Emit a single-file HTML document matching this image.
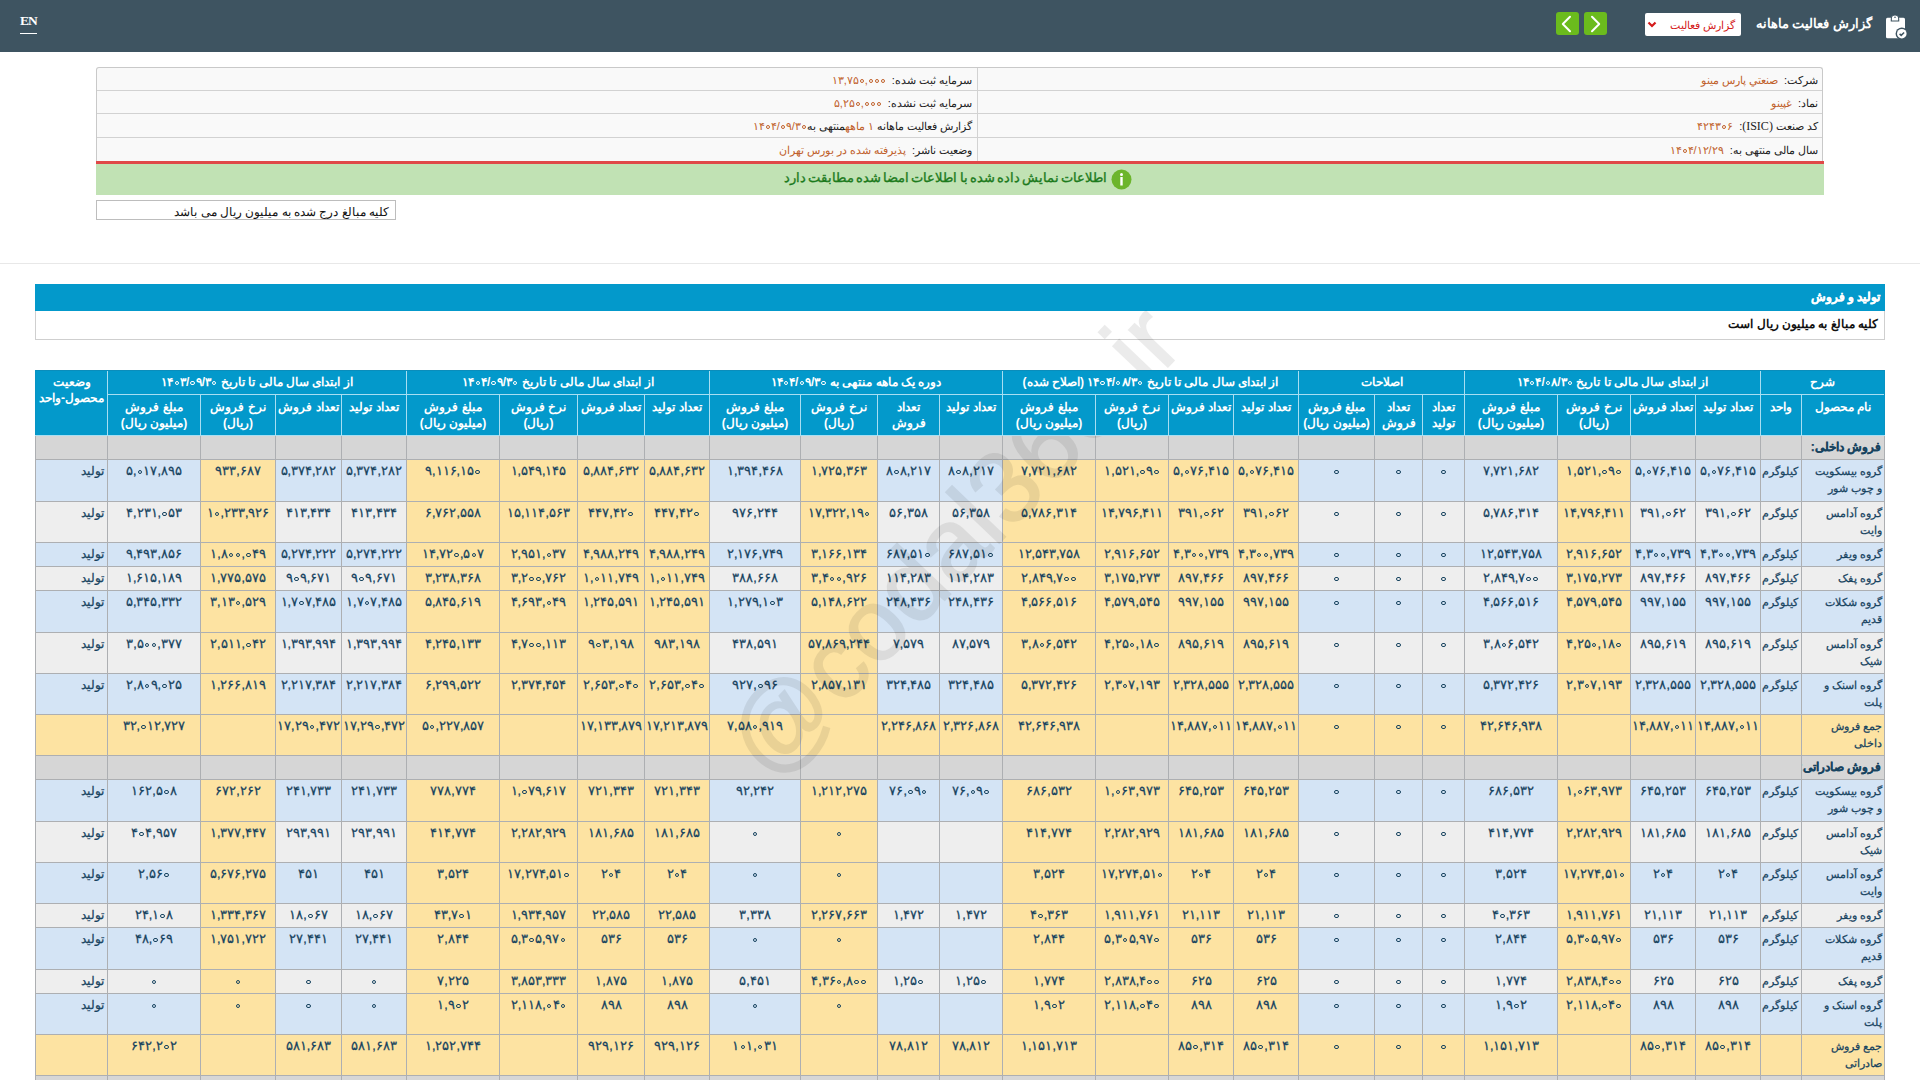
<!DOCTYPE html>
<html lang="fa" dir="rtl">
<head>
<meta charset="utf-8">
<style>
*{box-sizing:border-box}
html,body{margin:0;padding:0}
body{width:1920px;height:1080px;overflow:hidden;position:relative;background:#fff;font-family:"Liberation Sans",sans-serif;color:#222}
.a{position:absolute}
.top{left:0;top:0;width:1920px;height:52px;background:#3e5461}
.en{left:20px;top:13px;font-family:"Liberation Serif",serif;font-size:13.5px;font-weight:bold;letter-spacing:-1px;color:#fff;border-bottom:1px solid #fff;line-height:16px;padding-bottom:4px}
.ttl{right:48px;top:14px;font-size:12.8px;font-weight:bold;color:#fff;line-height:20px;white-space:nowrap}
.dd{left:1645px;top:13px;width:96px;height:23px;background:#fff;border-radius:2px}
.dd span{position:absolute;right:6px;top:3px;font-size:11px;color:#d41a1a;white-space:nowrap;line-height:18px}
.gb{top:12px;width:23px;height:23px;background:#6bbb1d;border-radius:3px}
.info{left:96px;top:67px;width:1727px;height:95px;border:1px solid #c9c9c9;border-bottom:none;border-radius:3px 3px 0 0;background:#f9f9f9}
.ir{position:absolute;height:1px;background:#d2d2d2}
.lb{position:absolute;font-size:11px;color:#222;white-space:nowrap;line-height:16px}
.lb b{font-weight:normal;color:#c0602a}
.red{left:96px;top:161px;width:1728px;height:3px;background:#e04848}
.grn{left:96px;top:164px;width:1728px;height:31px;background:#c1e2b4}
.gt{right:717px;top:5px;text-align:right;font-size:13px;font-weight:normal;word-spacing:-1.5px;color:#1c7a1c;-webkit-text-stroke:0.35px #1c7a1c;line-height:18px;white-space:nowrap}
.note{left:96px;top:200px;width:300px;height:20px;border:1px solid #bdbdbd;background:#fff}
.note span{position:absolute;right:6px;top:3px;font-size:12px;color:#111;white-space:nowrap;line-height:16px}
.sep{left:0;top:263px;width:1920px;height:1px;background:#e8e8e8}
.sech{left:35px;top:284px;width:1850px;height:27px;background:#0399cb}
.sech span{position:absolute;right:5px;top:5px;font-size:11.5px;font-weight:bold;color:#fff;-webkit-text-stroke:0.3px #fff;white-space:nowrap;line-height:16px}
.secb{left:35px;top:311px;width:1850px;height:29px;border:1px solid #cfcfcf;border-top:none;background:#fff}
.secb span{position:absolute;right:6px;top:5px;font-size:12px;font-weight:bold;color:#111;white-space:nowrap;line-height:16px}
.c{position:absolute;border:1px solid #adafb2;font-size:12.6px;line-height:17px;color:#17435f;-webkit-text-stroke:0.25px #17435f;text-align:center;padding-top:3px;white-space:nowrap;overflow:hidden}
.c.n{text-align:right;padding-right:2px;font-size:11.3px}
.c.u{text-align:right;padding-right:3px;font-size:11px}
.c.st{text-align:right;padding-right:3px;font-size:11.5px}
.c.s{text-align:right;padding-right:3px;font-weight:bold;padding-top:3px;font-size:12px}
.h{position:absolute;z-index:2;background:#0399cb;border:1px solid #a8def2;color:#fff;font-weight:bold;font-size:12px;text-align:center;line-height:16px;white-space:nowrap;overflow:hidden}
.h.g{padding-top:3px}
.h.sb{padding-top:4px}
.h.w{padding-top:3px}
.wm{left:953px;top:541px;font-size:102px;color:#000;-webkit-text-stroke:1.5px #000;opacity:0.075;transform:translate(-50%,-50%) rotate(-46.3deg);white-space:nowrap;direction:ltr;line-height:102px;z-index:1}
.ltr{direction:ltr;unicode-bidi:isolate;display:inline}
.z{display:inline-block;width:0.54em;height:0.54em;position:relative}
.z::after{content:"";position:absolute;left:0.09em;top:0.13em;width:0.36em;height:0.36em;border:0.14em solid currentColor;border-radius:50%;box-sizing:border-box}
</style>
</head>
<body>
<div class="a top"></div>
<div class="a en">EN</div>
<div class="a ttl">گزارش فعالیت ماهانه</div>
<svg class="a" style="left:1884px;top:14px" width="26" height="28" viewBox="0 0 26 28">
 <rect x="2" y="3.7" width="19" height="20.6" rx="1.5" fill="#fff"/>
 <path d="M7.3 7 V4.7 a3.7 3.7 0 0 1 7.4 0 V7 z" fill="#fff" stroke="#3e5461" stroke-width="1.1"/>
 <circle cx="11" cy="3.2" r="0.8" fill="#3e5461"/>
 <circle cx="17.8" cy="19.7" r="6.2" fill="#3e5461"/>
 <circle cx="17.8" cy="19.7" r="4.8" fill="#fff"/>
 <path d="M15.6 19.9 l1.6 1.5 l2.9 -2.9" stroke="#3e5461" stroke-width="1.5" fill="none"/>
</svg>
<div class="a dd"><span>گزارش فعالیت</span>
 <svg style="position:absolute;left:2px;top:8px" width="10" height="7" viewBox="0 0 10 7"><path d="M1.5 1.5 L5 5 L8.5 1.5" stroke="#d41a1a" stroke-width="2.2" fill="none"/></svg>
</div>
<div class="a gb" style="left:1556px"><svg width="23" height="23" viewBox="0 0 23 23"><path d="M14 4.8 L6.8 12 L14 19.2" stroke="#fff" stroke-width="2" stroke-linecap="round" stroke-linejoin="round" fill="none"/></svg></div>
<div class="a gb" style="left:1584px"><svg width="23" height="23" viewBox="0 0 23 23"><path d="M8 4.8 L15.2 12 L8 19.2" stroke="#fff" stroke-width="2" stroke-linecap="round" stroke-linejoin="round" fill="none"/></svg></div>

<div class="a info">
 <div class="ir" style="left:0;right:0;top:22px"></div>
 <div class="ir" style="left:0;right:0;top:45px"></div>
 <div class="ir" style="left:0;right:0;top:69px"></div>
 <div style="position:absolute;left:880px;top:0;width:1px;height:94px;background:#d2d2d2"></div>
 <div class="lb" style="right:4px;top:4px">شرکت: &nbsp;<b>صنعتي پارس مينو</b></div>
 <div class="lb" style="right:4px;top:27px">نماد: &nbsp;<b>غپينو</b></div>
 <div class="lb" style="right:4px;top:50px">کد صنعت <span style="font-family:'Liberation Serif',serif;font-size:12px">(ISIC)</span>: &nbsp;<b><span class="ltr">۴۲۴۳<i class="z"></i>۶</span></b></div>
 <div class="lb" style="right:4px;top:74px">سال مالی منتهی به: &nbsp;<b><span class="ltr">۱۴<i class="z"></i>۴/۱۲/۲۹</span></b></div>
 <div class="lb" style="right:850px;top:4px">سرمایه ثبت شده: &nbsp;<b><span class="ltr">۱۳,۷۵<i class="z"></i>,<i class="z"></i><i class="z"></i><i class="z"></i></span></b></div>
 <div class="lb" style="right:850px;top:27px">سرمایه ثبت نشده: &nbsp;<b><span class="ltr">۵,۲۵<i class="z"></i>,<i class="z"></i><i class="z"></i><i class="z"></i></span></b></div>
 <div class="lb" style="right:850px;top:50px">گزارش فعالیت ماهانه <b>۱ ماهه</b>منتهی به<b><span class="ltr">۱۴<i class="z"></i>۴/<i class="z"></i>۹/۳<i class="z"></i></span></b></div>
 <div class="lb" style="right:850px;top:74px">وضعیت ناشر: &nbsp;<b>پذيرفته شده در بورس تهران</b></div>
</div>
<div class="a red"></div>
<div class="a grn"><div class="a gt">اطلاعات نمایش داده شده با اطلاعات امضا شده مطابقت دارد</div>
 <svg class="a" style="left:1015px;top:5px" width="21" height="21" viewBox="0 0 21 21"><circle cx="10.5" cy="10.5" r="10" fill="#6cb52c"/><circle cx="10.5" cy="5.5" r="1.5" fill="#fff"/><rect x="9.3" y="8" width="2.4" height="8.5" fill="#fff"/></svg>
</div>
<div class="a note"><span>کلیه مبالغ درج شده به میلیون ریال می باشد</span></div>
<div class="a sep"></div>
<div class="a sech"><span>تولید و فروش</span></div>
<div class="a secb"><span>کلیه مبالغ به میلیون ریال است</span></div>

<div class="c s" style="left:1801px;top:435px;width:84px;height:25px;background:#d6d6d6">فروش داخلی:</div>
<div class="c s" style="left:1760px;top:435px;width:42px;height:25px;background:#d6d6d6"></div>
<div class="c s" style="left:1695px;top:435px;width:66px;height:25px;background:#d6d6d6"></div>
<div class="c s" style="left:1630px;top:435px;width:66px;height:25px;background:#d6d6d6"></div>
<div class="c s" style="left:1557px;top:435px;width:74px;height:25px;background:#d6d6d6"></div>
<div class="c s" style="left:1464px;top:435px;width:94px;height:25px;background:#d6d6d6"></div>
<div class="c s" style="left:1422px;top:435px;width:43px;height:25px;background:#d6d6d6"></div>
<div class="c s" style="left:1374px;top:435px;width:49px;height:25px;background:#d6d6d6"></div>
<div class="c s" style="left:1298px;top:435px;width:77px;height:25px;background:#d6d6d6"></div>
<div class="c s" style="left:1233px;top:435px;width:66px;height:25px;background:#d6d6d6"></div>
<div class="c s" style="left:1168px;top:435px;width:66px;height:25px;background:#d6d6d6"></div>
<div class="c s" style="left:1095px;top:435px;width:74px;height:25px;background:#d6d6d6"></div>
<div class="c s" style="left:1002px;top:435px;width:94px;height:25px;background:#d6d6d6"></div>
<div class="c s" style="left:939px;top:435px;width:64px;height:25px;background:#d6d6d6"></div>
<div class="c s" style="left:877px;top:435px;width:63px;height:25px;background:#d6d6d6"></div>
<div class="c s" style="left:800px;top:435px;width:78px;height:25px;background:#d6d6d6"></div>
<div class="c s" style="left:709px;top:435px;width:92px;height:25px;background:#d6d6d6"></div>
<div class="c s" style="left:644px;top:435px;width:66px;height:25px;background:#d6d6d6"></div>
<div class="c s" style="left:577px;top:435px;width:68px;height:25px;background:#d6d6d6"></div>
<div class="c s" style="left:499px;top:435px;width:79px;height:25px;background:#d6d6d6"></div>
<div class="c s" style="left:406px;top:435px;width:94px;height:25px;background:#d6d6d6"></div>
<div class="c s" style="left:341px;top:435px;width:66px;height:25px;background:#d6d6d6"></div>
<div class="c s" style="left:275px;top:435px;width:67px;height:25px;background:#d6d6d6"></div>
<div class="c s" style="left:200px;top:435px;width:76px;height:25px;background:#d6d6d6"></div>
<div class="c s" style="left:107px;top:435px;width:94px;height:25px;background:#d6d6d6"></div>
<div class="c s" style="left:35px;top:435px;width:73px;height:25px;background:#d6d6d6"></div>
<div class="c n" style="left:1801px;top:459px;width:84px;height:43px;background:#d4e4f5">گروه بیسکویت<br>و چوب شور</div>
<div class="c u" style="left:1760px;top:459px;width:42px;height:43px;background:#d4e4f5">کیلوگرم</div>
<div class="c" style="left:1695px;top:459px;width:66px;height:43px;background:#d4e4f5"><span class="ltr">۵,<i class="z"></i>۷۶,۴۱۵</span></div>
<div class="c" style="left:1630px;top:459px;width:66px;height:43px;background:#d4e4f5"><span class="ltr">۵,<i class="z"></i>۷۶,۴۱۵</span></div>
<div class="c" style="left:1557px;top:459px;width:74px;height:43px;background:#fde3a2"><span class="ltr">۱,۵۲۱,<i class="z"></i>۹<i class="z"></i></span></div>
<div class="c" style="left:1464px;top:459px;width:94px;height:43px;background:#d4e4f5">۷,۷۲۱,۶۸۲</div>
<div class="c" style="left:1422px;top:459px;width:43px;height:43px;background:#d4e4f5"><span class="ltr"><i class="z"></i></span></div>
<div class="c" style="left:1374px;top:459px;width:49px;height:43px;background:#d4e4f5"><span class="ltr"><i class="z"></i></span></div>
<div class="c" style="left:1298px;top:459px;width:77px;height:43px;background:#d4e4f5"><span class="ltr"><i class="z"></i></span></div>
<div class="c" style="left:1233px;top:459px;width:66px;height:43px;background:#fde3a2"><span class="ltr">۵,<i class="z"></i>۷۶,۴۱۵</span></div>
<div class="c" style="left:1168px;top:459px;width:66px;height:43px;background:#fde3a2"><span class="ltr">۵,<i class="z"></i>۷۶,۴۱۵</span></div>
<div class="c" style="left:1095px;top:459px;width:74px;height:43px;background:#fde3a2"><span class="ltr">۱,۵۲۱,<i class="z"></i>۹<i class="z"></i></span></div>
<div class="c" style="left:1002px;top:459px;width:94px;height:43px;background:#fde3a2">۷,۷۲۱,۶۸۲</div>
<div class="c" style="left:939px;top:459px;width:64px;height:43px;background:#d4e4f5"><span class="ltr">۸<i class="z"></i>۸,۲۱۷</span></div>
<div class="c" style="left:877px;top:459px;width:63px;height:43px;background:#d4e4f5"><span class="ltr">۸<i class="z"></i>۸,۲۱۷</span></div>
<div class="c" style="left:800px;top:459px;width:78px;height:43px;background:#fde3a2">۱,۷۲۵,۳۶۳</div>
<div class="c" style="left:709px;top:459px;width:92px;height:43px;background:#d4e4f5">۱,۳۹۴,۴۶۸</div>
<div class="c" style="left:644px;top:459px;width:66px;height:43px;background:#fde3a2">۵,۸۸۴,۶۳۲</div>
<div class="c" style="left:577px;top:459px;width:68px;height:43px;background:#fde3a2">۵,۸۸۴,۶۳۲</div>
<div class="c" style="left:499px;top:459px;width:79px;height:43px;background:#fde3a2">۱,۵۴۹,۱۴۵</div>
<div class="c" style="left:406px;top:459px;width:94px;height:43px;background:#fde3a2"><span class="ltr">۹,۱۱۶,۱۵<i class="z"></i></span></div>
<div class="c" style="left:341px;top:459px;width:66px;height:43px;background:#d4e4f5">۵,۳۷۴,۲۸۲</div>
<div class="c" style="left:275px;top:459px;width:67px;height:43px;background:#d4e4f5">۵,۳۷۴,۲۸۲</div>
<div class="c" style="left:200px;top:459px;width:76px;height:43px;background:#fde3a2">۹۳۳,۶۸۷</div>
<div class="c" style="left:107px;top:459px;width:94px;height:43px;background:#d4e4f5"><span class="ltr">۵,<i class="z"></i>۱۷,۸۹۵</span></div>
<div class="c st" style="left:35px;top:459px;width:73px;height:43px;background:#d4e4f5">تولید</div>
<div class="c n" style="left:1801px;top:501px;width:84px;height:42px;background:#eeeeee">گروه آدامس<br>وایت</div>
<div class="c u" style="left:1760px;top:501px;width:42px;height:42px;background:#eeeeee">کیلوگرم</div>
<div class="c" style="left:1695px;top:501px;width:66px;height:42px;background:#eeeeee"><span class="ltr">۳۹۱,<i class="z"></i>۶۲</span></div>
<div class="c" style="left:1630px;top:501px;width:66px;height:42px;background:#eeeeee"><span class="ltr">۳۹۱,<i class="z"></i>۶۲</span></div>
<div class="c" style="left:1557px;top:501px;width:74px;height:42px;background:#fde3a2">۱۴,۷۹۶,۴۱۱</div>
<div class="c" style="left:1464px;top:501px;width:94px;height:42px;background:#eeeeee">۵,۷۸۶,۳۱۴</div>
<div class="c" style="left:1422px;top:501px;width:43px;height:42px;background:#eeeeee"><span class="ltr"><i class="z"></i></span></div>
<div class="c" style="left:1374px;top:501px;width:49px;height:42px;background:#eeeeee"><span class="ltr"><i class="z"></i></span></div>
<div class="c" style="left:1298px;top:501px;width:77px;height:42px;background:#eeeeee"><span class="ltr"><i class="z"></i></span></div>
<div class="c" style="left:1233px;top:501px;width:66px;height:42px;background:#fde3a2"><span class="ltr">۳۹۱,<i class="z"></i>۶۲</span></div>
<div class="c" style="left:1168px;top:501px;width:66px;height:42px;background:#fde3a2"><span class="ltr">۳۹۱,<i class="z"></i>۶۲</span></div>
<div class="c" style="left:1095px;top:501px;width:74px;height:42px;background:#fde3a2">۱۴,۷۹۶,۴۱۱</div>
<div class="c" style="left:1002px;top:501px;width:94px;height:42px;background:#fde3a2">۵,۷۸۶,۳۱۴</div>
<div class="c" style="left:939px;top:501px;width:64px;height:42px;background:#eeeeee">۵۶,۳۵۸</div>
<div class="c" style="left:877px;top:501px;width:63px;height:42px;background:#eeeeee">۵۶,۳۵۸</div>
<div class="c" style="left:800px;top:501px;width:78px;height:42px;background:#fde3a2"><span class="ltr">۱۷,۳۲۲,۱۹<i class="z"></i></span></div>
<div class="c" style="left:709px;top:501px;width:92px;height:42px;background:#eeeeee">۹۷۶,۲۴۴</div>
<div class="c" style="left:644px;top:501px;width:66px;height:42px;background:#fde3a2"><span class="ltr">۴۴۷,۴۲<i class="z"></i></span></div>
<div class="c" style="left:577px;top:501px;width:68px;height:42px;background:#fde3a2"><span class="ltr">۴۴۷,۴۲<i class="z"></i></span></div>
<div class="c" style="left:499px;top:501px;width:79px;height:42px;background:#fde3a2">۱۵,۱۱۴,۵۶۳</div>
<div class="c" style="left:406px;top:501px;width:94px;height:42px;background:#fde3a2">۶,۷۶۲,۵۵۸</div>
<div class="c" style="left:341px;top:501px;width:66px;height:42px;background:#eeeeee">۴۱۳,۴۳۴</div>
<div class="c" style="left:275px;top:501px;width:67px;height:42px;background:#eeeeee">۴۱۳,۴۳۴</div>
<div class="c" style="left:200px;top:501px;width:76px;height:42px;background:#fde3a2"><span class="ltr">۱<i class="z"></i>,۲۳۳,۹۲۶</span></div>
<div class="c" style="left:107px;top:501px;width:94px;height:42px;background:#eeeeee"><span class="ltr">۴,۲۳۱,<i class="z"></i>۵۳</span></div>
<div class="c st" style="left:35px;top:501px;width:73px;height:42px;background:#eeeeee">تولید</div>
<div class="c n" style="left:1801px;top:542px;width:84px;height:25px;background:#d4e4f5">گروه ویفر</div>
<div class="c u" style="left:1760px;top:542px;width:42px;height:25px;background:#d4e4f5">کیلوگرم</div>
<div class="c" style="left:1695px;top:542px;width:66px;height:25px;background:#d4e4f5"><span class="ltr">۴,۳<i class="z"></i><i class="z"></i>,۷۳۹</span></div>
<div class="c" style="left:1630px;top:542px;width:66px;height:25px;background:#d4e4f5"><span class="ltr">۴,۳<i class="z"></i><i class="z"></i>,۷۳۹</span></div>
<div class="c" style="left:1557px;top:542px;width:74px;height:25px;background:#fde3a2">۲,۹۱۶,۶۵۲</div>
<div class="c" style="left:1464px;top:542px;width:94px;height:25px;background:#d4e4f5">۱۲,۵۴۳,۷۵۸</div>
<div class="c" style="left:1422px;top:542px;width:43px;height:25px;background:#d4e4f5"><span class="ltr"><i class="z"></i></span></div>
<div class="c" style="left:1374px;top:542px;width:49px;height:25px;background:#d4e4f5"><span class="ltr"><i class="z"></i></span></div>
<div class="c" style="left:1298px;top:542px;width:77px;height:25px;background:#d4e4f5"><span class="ltr"><i class="z"></i></span></div>
<div class="c" style="left:1233px;top:542px;width:66px;height:25px;background:#fde3a2"><span class="ltr">۴,۳<i class="z"></i><i class="z"></i>,۷۳۹</span></div>
<div class="c" style="left:1168px;top:542px;width:66px;height:25px;background:#fde3a2"><span class="ltr">۴,۳<i class="z"></i><i class="z"></i>,۷۳۹</span></div>
<div class="c" style="left:1095px;top:542px;width:74px;height:25px;background:#fde3a2">۲,۹۱۶,۶۵۲</div>
<div class="c" style="left:1002px;top:542px;width:94px;height:25px;background:#fde3a2">۱۲,۵۴۳,۷۵۸</div>
<div class="c" style="left:939px;top:542px;width:64px;height:25px;background:#d4e4f5"><span class="ltr">۶۸۷,۵۱<i class="z"></i></span></div>
<div class="c" style="left:877px;top:542px;width:63px;height:25px;background:#d4e4f5"><span class="ltr">۶۸۷,۵۱<i class="z"></i></span></div>
<div class="c" style="left:800px;top:542px;width:78px;height:25px;background:#fde3a2">۳,۱۶۶,۱۳۴</div>
<div class="c" style="left:709px;top:542px;width:92px;height:25px;background:#d4e4f5">۲,۱۷۶,۷۴۹</div>
<div class="c" style="left:644px;top:542px;width:66px;height:25px;background:#fde3a2">۴,۹۸۸,۲۴۹</div>
<div class="c" style="left:577px;top:542px;width:68px;height:25px;background:#fde3a2">۴,۹۸۸,۲۴۹</div>
<div class="c" style="left:499px;top:542px;width:79px;height:25px;background:#fde3a2"><span class="ltr">۲,۹۵۱,<i class="z"></i>۳۷</span></div>
<div class="c" style="left:406px;top:542px;width:94px;height:25px;background:#fde3a2"><span class="ltr">۱۴,۷۲<i class="z"></i>,۵<i class="z"></i>۷</span></div>
<div class="c" style="left:341px;top:542px;width:66px;height:25px;background:#d4e4f5">۵,۲۷۴,۲۲۲</div>
<div class="c" style="left:275px;top:542px;width:67px;height:25px;background:#d4e4f5">۵,۲۷۴,۲۲۲</div>
<div class="c" style="left:200px;top:542px;width:76px;height:25px;background:#fde3a2"><span class="ltr">۱,۸<i class="z"></i><i class="z"></i>,<i class="z"></i>۴۹</span></div>
<div class="c" style="left:107px;top:542px;width:94px;height:25px;background:#d4e4f5">۹,۴۹۳,۸۵۶</div>
<div class="c st" style="left:35px;top:542px;width:73px;height:25px;background:#d4e4f5">تولید</div>
<div class="c n" style="left:1801px;top:566px;width:84px;height:25px;background:#eeeeee">گروه پفک</div>
<div class="c u" style="left:1760px;top:566px;width:42px;height:25px;background:#eeeeee">کیلوگرم</div>
<div class="c" style="left:1695px;top:566px;width:66px;height:25px;background:#eeeeee">۸۹۷,۴۶۶</div>
<div class="c" style="left:1630px;top:566px;width:66px;height:25px;background:#eeeeee">۸۹۷,۴۶۶</div>
<div class="c" style="left:1557px;top:566px;width:74px;height:25px;background:#fde3a2">۳,۱۷۵,۲۷۳</div>
<div class="c" style="left:1464px;top:566px;width:94px;height:25px;background:#eeeeee"><span class="ltr">۲,۸۴۹,۷<i class="z"></i><i class="z"></i></span></div>
<div class="c" style="left:1422px;top:566px;width:43px;height:25px;background:#eeeeee"><span class="ltr"><i class="z"></i></span></div>
<div class="c" style="left:1374px;top:566px;width:49px;height:25px;background:#eeeeee"><span class="ltr"><i class="z"></i></span></div>
<div class="c" style="left:1298px;top:566px;width:77px;height:25px;background:#eeeeee"><span class="ltr"><i class="z"></i></span></div>
<div class="c" style="left:1233px;top:566px;width:66px;height:25px;background:#fde3a2">۸۹۷,۴۶۶</div>
<div class="c" style="left:1168px;top:566px;width:66px;height:25px;background:#fde3a2">۸۹۷,۴۶۶</div>
<div class="c" style="left:1095px;top:566px;width:74px;height:25px;background:#fde3a2">۳,۱۷۵,۲۷۳</div>
<div class="c" style="left:1002px;top:566px;width:94px;height:25px;background:#fde3a2"><span class="ltr">۲,۸۴۹,۷<i class="z"></i><i class="z"></i></span></div>
<div class="c" style="left:939px;top:566px;width:64px;height:25px;background:#eeeeee">۱۱۴,۲۸۳</div>
<div class="c" style="left:877px;top:566px;width:63px;height:25px;background:#eeeeee">۱۱۴,۲۸۳</div>
<div class="c" style="left:800px;top:566px;width:78px;height:25px;background:#fde3a2"><span class="ltr">۳,۴<i class="z"></i><i class="z"></i>,۹۲۶</span></div>
<div class="c" style="left:709px;top:566px;width:92px;height:25px;background:#eeeeee">۳۸۸,۶۶۸</div>
<div class="c" style="left:644px;top:566px;width:66px;height:25px;background:#fde3a2"><span class="ltr">۱,<i class="z"></i>۱۱,۷۴۹</span></div>
<div class="c" style="left:577px;top:566px;width:68px;height:25px;background:#fde3a2"><span class="ltr">۱,<i class="z"></i>۱۱,۷۴۹</span></div>
<div class="c" style="left:499px;top:566px;width:79px;height:25px;background:#fde3a2"><span class="ltr">۳,۲<i class="z"></i><i class="z"></i>,۷۶۲</span></div>
<div class="c" style="left:406px;top:566px;width:94px;height:25px;background:#fde3a2">۳,۲۳۸,۳۶۸</div>
<div class="c" style="left:341px;top:566px;width:66px;height:25px;background:#eeeeee"><span class="ltr">۹<i class="z"></i>۹,۶۷۱</span></div>
<div class="c" style="left:275px;top:566px;width:67px;height:25px;background:#eeeeee"><span class="ltr">۹<i class="z"></i>۹,۶۷۱</span></div>
<div class="c" style="left:200px;top:566px;width:76px;height:25px;background:#fde3a2">۱,۷۷۵,۵۷۵</div>
<div class="c" style="left:107px;top:566px;width:94px;height:25px;background:#eeeeee">۱,۶۱۵,۱۸۹</div>
<div class="c st" style="left:35px;top:566px;width:73px;height:25px;background:#eeeeee">تولید</div>
<div class="c n" style="left:1801px;top:590px;width:84px;height:43px;background:#d4e4f5">گروه شکلات<br>قدیم</div>
<div class="c u" style="left:1760px;top:590px;width:42px;height:43px;background:#d4e4f5">کیلوگرم</div>
<div class="c" style="left:1695px;top:590px;width:66px;height:43px;background:#d4e4f5">۹۹۷,۱۵۵</div>
<div class="c" style="left:1630px;top:590px;width:66px;height:43px;background:#d4e4f5">۹۹۷,۱۵۵</div>
<div class="c" style="left:1557px;top:590px;width:74px;height:43px;background:#fde3a2">۴,۵۷۹,۵۴۵</div>
<div class="c" style="left:1464px;top:590px;width:94px;height:43px;background:#d4e4f5">۴,۵۶۶,۵۱۶</div>
<div class="c" style="left:1422px;top:590px;width:43px;height:43px;background:#d4e4f5"><span class="ltr"><i class="z"></i></span></div>
<div class="c" style="left:1374px;top:590px;width:49px;height:43px;background:#d4e4f5"><span class="ltr"><i class="z"></i></span></div>
<div class="c" style="left:1298px;top:590px;width:77px;height:43px;background:#d4e4f5"><span class="ltr"><i class="z"></i></span></div>
<div class="c" style="left:1233px;top:590px;width:66px;height:43px;background:#fde3a2">۹۹۷,۱۵۵</div>
<div class="c" style="left:1168px;top:590px;width:66px;height:43px;background:#fde3a2">۹۹۷,۱۵۵</div>
<div class="c" style="left:1095px;top:590px;width:74px;height:43px;background:#fde3a2">۴,۵۷۹,۵۴۵</div>
<div class="c" style="left:1002px;top:590px;width:94px;height:43px;background:#fde3a2">۴,۵۶۶,۵۱۶</div>
<div class="c" style="left:939px;top:590px;width:64px;height:43px;background:#d4e4f5">۲۴۸,۴۳۶</div>
<div class="c" style="left:877px;top:590px;width:63px;height:43px;background:#d4e4f5">۲۴۸,۴۳۶</div>
<div class="c" style="left:800px;top:590px;width:78px;height:43px;background:#fde3a2">۵,۱۴۸,۶۲۲</div>
<div class="c" style="left:709px;top:590px;width:92px;height:43px;background:#d4e4f5"><span class="ltr">۱,۲۷۹,۱<i class="z"></i>۳</span></div>
<div class="c" style="left:644px;top:590px;width:66px;height:43px;background:#fde3a2">۱,۲۴۵,۵۹۱</div>
<div class="c" style="left:577px;top:590px;width:68px;height:43px;background:#fde3a2">۱,۲۴۵,۵۹۱</div>
<div class="c" style="left:499px;top:590px;width:79px;height:43px;background:#fde3a2"><span class="ltr">۴,۶۹۳,<i class="z"></i>۴۹</span></div>
<div class="c" style="left:406px;top:590px;width:94px;height:43px;background:#fde3a2">۵,۸۴۵,۶۱۹</div>
<div class="c" style="left:341px;top:590px;width:66px;height:43px;background:#d4e4f5"><span class="ltr">۱,۷<i class="z"></i>۷,۴۸۵</span></div>
<div class="c" style="left:275px;top:590px;width:67px;height:43px;background:#d4e4f5"><span class="ltr">۱,۷<i class="z"></i>۷,۴۸۵</span></div>
<div class="c" style="left:200px;top:590px;width:76px;height:43px;background:#fde3a2"><span class="ltr">۳,۱۳<i class="z"></i>,۵۲۹</span></div>
<div class="c" style="left:107px;top:590px;width:94px;height:43px;background:#d4e4f5">۵,۳۴۵,۳۳۲</div>
<div class="c st" style="left:35px;top:590px;width:73px;height:43px;background:#d4e4f5">تولید</div>
<div class="c n" style="left:1801px;top:632px;width:84px;height:42px;background:#eeeeee">گروه آدامس<br>شیک</div>
<div class="c u" style="left:1760px;top:632px;width:42px;height:42px;background:#eeeeee">کیلوگرم</div>
<div class="c" style="left:1695px;top:632px;width:66px;height:42px;background:#eeeeee">۸۹۵,۶۱۹</div>
<div class="c" style="left:1630px;top:632px;width:66px;height:42px;background:#eeeeee">۸۹۵,۶۱۹</div>
<div class="c" style="left:1557px;top:632px;width:74px;height:42px;background:#fde3a2"><span class="ltr">۴,۲۵<i class="z"></i>,۱۸<i class="z"></i></span></div>
<div class="c" style="left:1464px;top:632px;width:94px;height:42px;background:#eeeeee"><span class="ltr">۳,۸<i class="z"></i>۶,۵۴۲</span></div>
<div class="c" style="left:1422px;top:632px;width:43px;height:42px;background:#eeeeee"><span class="ltr"><i class="z"></i></span></div>
<div class="c" style="left:1374px;top:632px;width:49px;height:42px;background:#eeeeee"><span class="ltr"><i class="z"></i></span></div>
<div class="c" style="left:1298px;top:632px;width:77px;height:42px;background:#eeeeee"><span class="ltr"><i class="z"></i></span></div>
<div class="c" style="left:1233px;top:632px;width:66px;height:42px;background:#fde3a2">۸۹۵,۶۱۹</div>
<div class="c" style="left:1168px;top:632px;width:66px;height:42px;background:#fde3a2">۸۹۵,۶۱۹</div>
<div class="c" style="left:1095px;top:632px;width:74px;height:42px;background:#fde3a2"><span class="ltr">۴,۲۵<i class="z"></i>,۱۸<i class="z"></i></span></div>
<div class="c" style="left:1002px;top:632px;width:94px;height:42px;background:#fde3a2"><span class="ltr">۳,۸<i class="z"></i>۶,۵۴۲</span></div>
<div class="c" style="left:939px;top:632px;width:64px;height:42px;background:#eeeeee">۸۷,۵۷۹</div>
<div class="c" style="left:877px;top:632px;width:63px;height:42px;background:#eeeeee">۷,۵۷۹</div>
<div class="c" style="left:800px;top:632px;width:78px;height:42px;background:#fde3a2">۵۷,۸۶۹,۲۴۴</div>
<div class="c" style="left:709px;top:632px;width:92px;height:42px;background:#eeeeee">۴۳۸,۵۹۱</div>
<div class="c" style="left:644px;top:632px;width:66px;height:42px;background:#fde3a2">۹۸۳,۱۹۸</div>
<div class="c" style="left:577px;top:632px;width:68px;height:42px;background:#fde3a2"><span class="ltr">۹<i class="z"></i>۳,۱۹۸</span></div>
<div class="c" style="left:499px;top:632px;width:79px;height:42px;background:#fde3a2"><span class="ltr">۴,۷<i class="z"></i><i class="z"></i>,۱۱۳</span></div>
<div class="c" style="left:406px;top:632px;width:94px;height:42px;background:#fde3a2">۴,۲۴۵,۱۳۳</div>
<div class="c" style="left:341px;top:632px;width:66px;height:42px;background:#eeeeee">۱,۳۹۳,۹۹۴</div>
<div class="c" style="left:275px;top:632px;width:67px;height:42px;background:#eeeeee">۱,۳۹۳,۹۹۴</div>
<div class="c" style="left:200px;top:632px;width:76px;height:42px;background:#fde3a2"><span class="ltr">۲,۵۱۱,<i class="z"></i>۴۲</span></div>
<div class="c" style="left:107px;top:632px;width:94px;height:42px;background:#eeeeee"><span class="ltr">۳,۵<i class="z"></i><i class="z"></i>,۳۷۷</span></div>
<div class="c st" style="left:35px;top:632px;width:73px;height:42px;background:#eeeeee">تولید</div>
<div class="c n" style="left:1801px;top:673px;width:84px;height:42px;background:#d4e4f5">گروه اسنک و<br>پلت</div>
<div class="c u" style="left:1760px;top:673px;width:42px;height:42px;background:#d4e4f5">کیلوگرم</div>
<div class="c" style="left:1695px;top:673px;width:66px;height:42px;background:#d4e4f5">۲,۳۲۸,۵۵۵</div>
<div class="c" style="left:1630px;top:673px;width:66px;height:42px;background:#d4e4f5">۲,۳۲۸,۵۵۵</div>
<div class="c" style="left:1557px;top:673px;width:74px;height:42px;background:#fde3a2"><span class="ltr">۲,۳<i class="z"></i>۷,۱۹۳</span></div>
<div class="c" style="left:1464px;top:673px;width:94px;height:42px;background:#d4e4f5">۵,۳۷۲,۴۲۶</div>
<div class="c" style="left:1422px;top:673px;width:43px;height:42px;background:#d4e4f5"><span class="ltr"><i class="z"></i></span></div>
<div class="c" style="left:1374px;top:673px;width:49px;height:42px;background:#d4e4f5"><span class="ltr"><i class="z"></i></span></div>
<div class="c" style="left:1298px;top:673px;width:77px;height:42px;background:#d4e4f5"><span class="ltr"><i class="z"></i></span></div>
<div class="c" style="left:1233px;top:673px;width:66px;height:42px;background:#fde3a2">۲,۳۲۸,۵۵۵</div>
<div class="c" style="left:1168px;top:673px;width:66px;height:42px;background:#fde3a2">۲,۳۲۸,۵۵۵</div>
<div class="c" style="left:1095px;top:673px;width:74px;height:42px;background:#fde3a2"><span class="ltr">۲,۳<i class="z"></i>۷,۱۹۳</span></div>
<div class="c" style="left:1002px;top:673px;width:94px;height:42px;background:#fde3a2">۵,۳۷۲,۴۲۶</div>
<div class="c" style="left:939px;top:673px;width:64px;height:42px;background:#d4e4f5">۳۲۴,۴۸۵</div>
<div class="c" style="left:877px;top:673px;width:63px;height:42px;background:#d4e4f5">۳۲۴,۴۸۵</div>
<div class="c" style="left:800px;top:673px;width:78px;height:42px;background:#fde3a2">۲,۸۵۷,۱۳۱</div>
<div class="c" style="left:709px;top:673px;width:92px;height:42px;background:#d4e4f5"><span class="ltr">۹۲۷,<i class="z"></i>۹۶</span></div>
<div class="c" style="left:644px;top:673px;width:66px;height:42px;background:#fde3a2"><span class="ltr">۲,۶۵۳,<i class="z"></i>۴<i class="z"></i></span></div>
<div class="c" style="left:577px;top:673px;width:68px;height:42px;background:#fde3a2"><span class="ltr">۲,۶۵۳,<i class="z"></i>۴<i class="z"></i></span></div>
<div class="c" style="left:499px;top:673px;width:79px;height:42px;background:#fde3a2">۲,۳۷۴,۴۵۴</div>
<div class="c" style="left:406px;top:673px;width:94px;height:42px;background:#fde3a2">۶,۲۹۹,۵۲۲</div>
<div class="c" style="left:341px;top:673px;width:66px;height:42px;background:#d4e4f5">۲,۲۱۷,۳۸۴</div>
<div class="c" style="left:275px;top:673px;width:67px;height:42px;background:#d4e4f5">۲,۲۱۷,۳۸۴</div>
<div class="c" style="left:200px;top:673px;width:76px;height:42px;background:#fde3a2">۱,۲۶۶,۸۱۹</div>
<div class="c" style="left:107px;top:673px;width:94px;height:42px;background:#d4e4f5"><span class="ltr">۲,۸<i class="z"></i>۹,<i class="z"></i>۲۵</span></div>
<div class="c st" style="left:35px;top:673px;width:73px;height:42px;background:#d4e4f5">تولید</div>
<div class="c n" style="left:1801px;top:714px;width:84px;height:42px;background:#fde3a2">جمع فروش<br>داخلی</div>
<div class="c" style="left:1760px;top:714px;width:42px;height:42px;background:#fde3a2"></div>
<div class="c" style="left:1695px;top:714px;width:66px;height:42px;background:#fde3a2"><span class="ltr">۱۴,۸۸۷,<i class="z"></i>۱۱</span></div>
<div class="c" style="left:1630px;top:714px;width:66px;height:42px;background:#fde3a2"><span class="ltr">۱۴,۸۸۷,<i class="z"></i>۱۱</span></div>
<div class="c" style="left:1557px;top:714px;width:74px;height:42px;background:#fde3a2"></div>
<div class="c" style="left:1464px;top:714px;width:94px;height:42px;background:#fde3a2">۴۲,۶۴۶,۹۳۸</div>
<div class="c" style="left:1422px;top:714px;width:43px;height:42px;background:#fde3a2"><span class="ltr"><i class="z"></i></span></div>
<div class="c" style="left:1374px;top:714px;width:49px;height:42px;background:#fde3a2"><span class="ltr"><i class="z"></i></span></div>
<div class="c" style="left:1298px;top:714px;width:77px;height:42px;background:#fde3a2"><span class="ltr"><i class="z"></i></span></div>
<div class="c" style="left:1233px;top:714px;width:66px;height:42px;background:#fde3a2"><span class="ltr">۱۴,۸۸۷,<i class="z"></i>۱۱</span></div>
<div class="c" style="left:1168px;top:714px;width:66px;height:42px;background:#fde3a2"><span class="ltr">۱۴,۸۸۷,<i class="z"></i>۱۱</span></div>
<div class="c" style="left:1095px;top:714px;width:74px;height:42px;background:#fde3a2"></div>
<div class="c" style="left:1002px;top:714px;width:94px;height:42px;background:#fde3a2">۴۲,۶۴۶,۹۳۸</div>
<div class="c" style="left:939px;top:714px;width:64px;height:42px;background:#fde3a2">۲,۳۲۶,۸۶۸</div>
<div class="c" style="left:877px;top:714px;width:63px;height:42px;background:#fde3a2">۲,۲۴۶,۸۶۸</div>
<div class="c" style="left:800px;top:714px;width:78px;height:42px;background:#fde3a2"></div>
<div class="c" style="left:709px;top:714px;width:92px;height:42px;background:#fde3a2"><span class="ltr">۷,۵۸<i class="z"></i>,۹۱۹</span></div>
<div class="c" style="left:644px;top:714px;width:66px;height:42px;background:#fde3a2">۱۷,۲۱۳,۸۷۹</div>
<div class="c" style="left:577px;top:714px;width:68px;height:42px;background:#fde3a2">۱۷,۱۳۳,۸۷۹</div>
<div class="c" style="left:499px;top:714px;width:79px;height:42px;background:#fde3a2"></div>
<div class="c" style="left:406px;top:714px;width:94px;height:42px;background:#fde3a2"><span class="ltr">۵<i class="z"></i>,۲۲۷,۸۵۷</span></div>
<div class="c" style="left:341px;top:714px;width:66px;height:42px;background:#fde3a2"><span class="ltr">۱۷,۲۹<i class="z"></i>,۴۷۲</span></div>
<div class="c" style="left:275px;top:714px;width:67px;height:42px;background:#fde3a2"><span class="ltr">۱۷,۲۹<i class="z"></i>,۴۷۲</span></div>
<div class="c" style="left:200px;top:714px;width:76px;height:42px;background:#fde3a2"></div>
<div class="c" style="left:107px;top:714px;width:94px;height:42px;background:#fde3a2"><span class="ltr">۳۲,<i class="z"></i>۱۲,۷۲۷</span></div>
<div class="c" style="left:35px;top:714px;width:73px;height:42px;background:#fde3a2"></div>
<div class="c s" style="left:1801px;top:755px;width:84px;height:25px;background:#d6d6d6">فروش صادراتی:</div>
<div class="c s" style="left:1760px;top:755px;width:42px;height:25px;background:#d6d6d6"></div>
<div class="c s" style="left:1695px;top:755px;width:66px;height:25px;background:#d6d6d6"></div>
<div class="c s" style="left:1630px;top:755px;width:66px;height:25px;background:#d6d6d6"></div>
<div class="c s" style="left:1557px;top:755px;width:74px;height:25px;background:#d6d6d6"></div>
<div class="c s" style="left:1464px;top:755px;width:94px;height:25px;background:#d6d6d6"></div>
<div class="c s" style="left:1422px;top:755px;width:43px;height:25px;background:#d6d6d6"></div>
<div class="c s" style="left:1374px;top:755px;width:49px;height:25px;background:#d6d6d6"></div>
<div class="c s" style="left:1298px;top:755px;width:77px;height:25px;background:#d6d6d6"></div>
<div class="c s" style="left:1233px;top:755px;width:66px;height:25px;background:#d6d6d6"></div>
<div class="c s" style="left:1168px;top:755px;width:66px;height:25px;background:#d6d6d6"></div>
<div class="c s" style="left:1095px;top:755px;width:74px;height:25px;background:#d6d6d6"></div>
<div class="c s" style="left:1002px;top:755px;width:94px;height:25px;background:#d6d6d6"></div>
<div class="c s" style="left:939px;top:755px;width:64px;height:25px;background:#d6d6d6"></div>
<div class="c s" style="left:877px;top:755px;width:63px;height:25px;background:#d6d6d6"></div>
<div class="c s" style="left:800px;top:755px;width:78px;height:25px;background:#d6d6d6"></div>
<div class="c s" style="left:709px;top:755px;width:92px;height:25px;background:#d6d6d6"></div>
<div class="c s" style="left:644px;top:755px;width:66px;height:25px;background:#d6d6d6"></div>
<div class="c s" style="left:577px;top:755px;width:68px;height:25px;background:#d6d6d6"></div>
<div class="c s" style="left:499px;top:755px;width:79px;height:25px;background:#d6d6d6"></div>
<div class="c s" style="left:406px;top:755px;width:94px;height:25px;background:#d6d6d6"></div>
<div class="c s" style="left:341px;top:755px;width:66px;height:25px;background:#d6d6d6"></div>
<div class="c s" style="left:275px;top:755px;width:67px;height:25px;background:#d6d6d6"></div>
<div class="c s" style="left:200px;top:755px;width:76px;height:25px;background:#d6d6d6"></div>
<div class="c s" style="left:107px;top:755px;width:94px;height:25px;background:#d6d6d6"></div>
<div class="c s" style="left:35px;top:755px;width:73px;height:25px;background:#d6d6d6"></div>
<div class="c n" style="left:1801px;top:779px;width:84px;height:43px;background:#d4e4f5">گروه بیسکویت<br>و چوب شور</div>
<div class="c u" style="left:1760px;top:779px;width:42px;height:43px;background:#d4e4f5">کیلوگرم</div>
<div class="c" style="left:1695px;top:779px;width:66px;height:43px;background:#d4e4f5">۶۴۵,۲۵۳</div>
<div class="c" style="left:1630px;top:779px;width:66px;height:43px;background:#d4e4f5">۶۴۵,۲۵۳</div>
<div class="c" style="left:1557px;top:779px;width:74px;height:43px;background:#fde3a2"><span class="ltr">۱,<i class="z"></i>۶۳,۹۷۳</span></div>
<div class="c" style="left:1464px;top:779px;width:94px;height:43px;background:#d4e4f5">۶۸۶,۵۳۲</div>
<div class="c" style="left:1422px;top:779px;width:43px;height:43px;background:#d4e4f5"><span class="ltr"><i class="z"></i></span></div>
<div class="c" style="left:1374px;top:779px;width:49px;height:43px;background:#d4e4f5"><span class="ltr"><i class="z"></i></span></div>
<div class="c" style="left:1298px;top:779px;width:77px;height:43px;background:#d4e4f5"><span class="ltr"><i class="z"></i></span></div>
<div class="c" style="left:1233px;top:779px;width:66px;height:43px;background:#fde3a2">۶۴۵,۲۵۳</div>
<div class="c" style="left:1168px;top:779px;width:66px;height:43px;background:#fde3a2">۶۴۵,۲۵۳</div>
<div class="c" style="left:1095px;top:779px;width:74px;height:43px;background:#fde3a2"><span class="ltr">۱,<i class="z"></i>۶۳,۹۷۳</span></div>
<div class="c" style="left:1002px;top:779px;width:94px;height:43px;background:#fde3a2">۶۸۶,۵۳۲</div>
<div class="c" style="left:939px;top:779px;width:64px;height:43px;background:#d4e4f5"><span class="ltr">۷۶,<i class="z"></i>۹<i class="z"></i></span></div>
<div class="c" style="left:877px;top:779px;width:63px;height:43px;background:#d4e4f5"><span class="ltr">۷۶,<i class="z"></i>۹<i class="z"></i></span></div>
<div class="c" style="left:800px;top:779px;width:78px;height:43px;background:#fde3a2">۱,۲۱۲,۲۷۵</div>
<div class="c" style="left:709px;top:779px;width:92px;height:43px;background:#d4e4f5">۹۲,۲۴۲</div>
<div class="c" style="left:644px;top:779px;width:66px;height:43px;background:#fde3a2">۷۲۱,۳۴۳</div>
<div class="c" style="left:577px;top:779px;width:68px;height:43px;background:#fde3a2">۷۲۱,۳۴۳</div>
<div class="c" style="left:499px;top:779px;width:79px;height:43px;background:#fde3a2"><span class="ltr">۱,<i class="z"></i>۷۹,۶۱۷</span></div>
<div class="c" style="left:406px;top:779px;width:94px;height:43px;background:#fde3a2">۷۷۸,۷۷۴</div>
<div class="c" style="left:341px;top:779px;width:66px;height:43px;background:#d4e4f5">۲۴۱,۷۳۳</div>
<div class="c" style="left:275px;top:779px;width:67px;height:43px;background:#d4e4f5">۲۴۱,۷۳۳</div>
<div class="c" style="left:200px;top:779px;width:76px;height:43px;background:#fde3a2">۶۷۲,۲۶۲</div>
<div class="c" style="left:107px;top:779px;width:94px;height:43px;background:#d4e4f5"><span class="ltr">۱۶۲,۵<i class="z"></i>۸</span></div>
<div class="c st" style="left:35px;top:779px;width:73px;height:43px;background:#d4e4f5">تولید</div>
<div class="c n" style="left:1801px;top:821px;width:84px;height:42px;background:#eeeeee">گروه آدامس<br>شیک</div>
<div class="c u" style="left:1760px;top:821px;width:42px;height:42px;background:#eeeeee">کیلوگرم</div>
<div class="c" style="left:1695px;top:821px;width:66px;height:42px;background:#eeeeee">۱۸۱,۶۸۵</div>
<div class="c" style="left:1630px;top:821px;width:66px;height:42px;background:#eeeeee">۱۸۱,۶۸۵</div>
<div class="c" style="left:1557px;top:821px;width:74px;height:42px;background:#fde3a2">۲,۲۸۲,۹۲۹</div>
<div class="c" style="left:1464px;top:821px;width:94px;height:42px;background:#eeeeee">۴۱۴,۷۷۴</div>
<div class="c" style="left:1422px;top:821px;width:43px;height:42px;background:#eeeeee"><span class="ltr"><i class="z"></i></span></div>
<div class="c" style="left:1374px;top:821px;width:49px;height:42px;background:#eeeeee"><span class="ltr"><i class="z"></i></span></div>
<div class="c" style="left:1298px;top:821px;width:77px;height:42px;background:#eeeeee"><span class="ltr"><i class="z"></i></span></div>
<div class="c" style="left:1233px;top:821px;width:66px;height:42px;background:#fde3a2">۱۸۱,۶۸۵</div>
<div class="c" style="left:1168px;top:821px;width:66px;height:42px;background:#fde3a2">۱۸۱,۶۸۵</div>
<div class="c" style="left:1095px;top:821px;width:74px;height:42px;background:#fde3a2">۲,۲۸۲,۹۲۹</div>
<div class="c" style="left:1002px;top:821px;width:94px;height:42px;background:#fde3a2">۴۱۴,۷۷۴</div>
<div class="c" style="left:939px;top:821px;width:64px;height:42px;background:#eeeeee"></div>
<div class="c" style="left:877px;top:821px;width:63px;height:42px;background:#eeeeee"></div>
<div class="c" style="left:800px;top:821px;width:78px;height:42px;background:#fde3a2"><span class="ltr"><i class="z"></i></span></div>
<div class="c" style="left:709px;top:821px;width:92px;height:42px;background:#eeeeee"><span class="ltr"><i class="z"></i></span></div>
<div class="c" style="left:644px;top:821px;width:66px;height:42px;background:#fde3a2">۱۸۱,۶۸۵</div>
<div class="c" style="left:577px;top:821px;width:68px;height:42px;background:#fde3a2">۱۸۱,۶۸۵</div>
<div class="c" style="left:499px;top:821px;width:79px;height:42px;background:#fde3a2">۲,۲۸۲,۹۲۹</div>
<div class="c" style="left:406px;top:821px;width:94px;height:42px;background:#fde3a2">۴۱۴,۷۷۴</div>
<div class="c" style="left:341px;top:821px;width:66px;height:42px;background:#eeeeee">۲۹۳,۹۹۱</div>
<div class="c" style="left:275px;top:821px;width:67px;height:42px;background:#eeeeee">۲۹۳,۹۹۱</div>
<div class="c" style="left:200px;top:821px;width:76px;height:42px;background:#fde3a2">۱,۳۷۷,۴۴۷</div>
<div class="c" style="left:107px;top:821px;width:94px;height:42px;background:#eeeeee"><span class="ltr">۴<i class="z"></i>۴,۹۵۷</span></div>
<div class="c st" style="left:35px;top:821px;width:73px;height:42px;background:#eeeeee">تولید</div>
<div class="c n" style="left:1801px;top:862px;width:84px;height:42px;background:#d4e4f5">گروه آدامس<br>وایت</div>
<div class="c u" style="left:1760px;top:862px;width:42px;height:42px;background:#d4e4f5">کیلوگرم</div>
<div class="c" style="left:1695px;top:862px;width:66px;height:42px;background:#d4e4f5"><span class="ltr">۲<i class="z"></i>۴</span></div>
<div class="c" style="left:1630px;top:862px;width:66px;height:42px;background:#d4e4f5"><span class="ltr">۲<i class="z"></i>۴</span></div>
<div class="c" style="left:1557px;top:862px;width:74px;height:42px;background:#fde3a2"><span class="ltr">۱۷,۲۷۴,۵۱<i class="z"></i></span></div>
<div class="c" style="left:1464px;top:862px;width:94px;height:42px;background:#d4e4f5">۳,۵۲۴</div>
<div class="c" style="left:1422px;top:862px;width:43px;height:42px;background:#d4e4f5"><span class="ltr"><i class="z"></i></span></div>
<div class="c" style="left:1374px;top:862px;width:49px;height:42px;background:#d4e4f5"><span class="ltr"><i class="z"></i></span></div>
<div class="c" style="left:1298px;top:862px;width:77px;height:42px;background:#d4e4f5"><span class="ltr"><i class="z"></i></span></div>
<div class="c" style="left:1233px;top:862px;width:66px;height:42px;background:#fde3a2"><span class="ltr">۲<i class="z"></i>۴</span></div>
<div class="c" style="left:1168px;top:862px;width:66px;height:42px;background:#fde3a2"><span class="ltr">۲<i class="z"></i>۴</span></div>
<div class="c" style="left:1095px;top:862px;width:74px;height:42px;background:#fde3a2"><span class="ltr">۱۷,۲۷۴,۵۱<i class="z"></i></span></div>
<div class="c" style="left:1002px;top:862px;width:94px;height:42px;background:#fde3a2">۳,۵۲۴</div>
<div class="c" style="left:939px;top:862px;width:64px;height:42px;background:#d4e4f5"></div>
<div class="c" style="left:877px;top:862px;width:63px;height:42px;background:#d4e4f5"></div>
<div class="c" style="left:800px;top:862px;width:78px;height:42px;background:#fde3a2"><span class="ltr"><i class="z"></i></span></div>
<div class="c" style="left:709px;top:862px;width:92px;height:42px;background:#d4e4f5"><span class="ltr"><i class="z"></i></span></div>
<div class="c" style="left:644px;top:862px;width:66px;height:42px;background:#fde3a2"><span class="ltr">۲<i class="z"></i>۴</span></div>
<div class="c" style="left:577px;top:862px;width:68px;height:42px;background:#fde3a2"><span class="ltr">۲<i class="z"></i>۴</span></div>
<div class="c" style="left:499px;top:862px;width:79px;height:42px;background:#fde3a2"><span class="ltr">۱۷,۲۷۴,۵۱<i class="z"></i></span></div>
<div class="c" style="left:406px;top:862px;width:94px;height:42px;background:#fde3a2">۳,۵۲۴</div>
<div class="c" style="left:341px;top:862px;width:66px;height:42px;background:#d4e4f5">۴۵۱</div>
<div class="c" style="left:275px;top:862px;width:67px;height:42px;background:#d4e4f5">۴۵۱</div>
<div class="c" style="left:200px;top:862px;width:76px;height:42px;background:#fde3a2">۵,۶۷۶,۲۷۵</div>
<div class="c" style="left:107px;top:862px;width:94px;height:42px;background:#d4e4f5"><span class="ltr">۲,۵۶<i class="z"></i></span></div>
<div class="c st" style="left:35px;top:862px;width:73px;height:42px;background:#d4e4f5">تولید</div>
<div class="c n" style="left:1801px;top:903px;width:84px;height:25px;background:#eeeeee">گروه ویفر</div>
<div class="c u" style="left:1760px;top:903px;width:42px;height:25px;background:#eeeeee">کیلوگرم</div>
<div class="c" style="left:1695px;top:903px;width:66px;height:25px;background:#eeeeee">۲۱,۱۱۳</div>
<div class="c" style="left:1630px;top:903px;width:66px;height:25px;background:#eeeeee">۲۱,۱۱۳</div>
<div class="c" style="left:1557px;top:903px;width:74px;height:25px;background:#fde3a2">۱,۹۱۱,۷۶۱</div>
<div class="c" style="left:1464px;top:903px;width:94px;height:25px;background:#eeeeee"><span class="ltr">۴<i class="z"></i>,۳۶۳</span></div>
<div class="c" style="left:1422px;top:903px;width:43px;height:25px;background:#eeeeee"><span class="ltr"><i class="z"></i></span></div>
<div class="c" style="left:1374px;top:903px;width:49px;height:25px;background:#eeeeee"><span class="ltr"><i class="z"></i></span></div>
<div class="c" style="left:1298px;top:903px;width:77px;height:25px;background:#eeeeee"><span class="ltr"><i class="z"></i></span></div>
<div class="c" style="left:1233px;top:903px;width:66px;height:25px;background:#fde3a2">۲۱,۱۱۳</div>
<div class="c" style="left:1168px;top:903px;width:66px;height:25px;background:#fde3a2">۲۱,۱۱۳</div>
<div class="c" style="left:1095px;top:903px;width:74px;height:25px;background:#fde3a2">۱,۹۱۱,۷۶۱</div>
<div class="c" style="left:1002px;top:903px;width:94px;height:25px;background:#fde3a2"><span class="ltr">۴<i class="z"></i>,۳۶۳</span></div>
<div class="c" style="left:939px;top:903px;width:64px;height:25px;background:#eeeeee">۱,۴۷۲</div>
<div class="c" style="left:877px;top:903px;width:63px;height:25px;background:#eeeeee">۱,۴۷۲</div>
<div class="c" style="left:800px;top:903px;width:78px;height:25px;background:#fde3a2">۲,۲۶۷,۶۶۳</div>
<div class="c" style="left:709px;top:903px;width:92px;height:25px;background:#eeeeee">۳,۳۳۸</div>
<div class="c" style="left:644px;top:903px;width:66px;height:25px;background:#fde3a2">۲۲,۵۸۵</div>
<div class="c" style="left:577px;top:903px;width:68px;height:25px;background:#fde3a2">۲۲,۵۸۵</div>
<div class="c" style="left:499px;top:903px;width:79px;height:25px;background:#fde3a2">۱,۹۳۴,۹۵۷</div>
<div class="c" style="left:406px;top:903px;width:94px;height:25px;background:#fde3a2"><span class="ltr">۴۳,۷<i class="z"></i>۱</span></div>
<div class="c" style="left:341px;top:903px;width:66px;height:25px;background:#eeeeee"><span class="ltr">۱۸,<i class="z"></i>۶۷</span></div>
<div class="c" style="left:275px;top:903px;width:67px;height:25px;background:#eeeeee"><span class="ltr">۱۸,<i class="z"></i>۶۷</span></div>
<div class="c" style="left:200px;top:903px;width:76px;height:25px;background:#fde3a2">۱,۳۳۴,۳۶۷</div>
<div class="c" style="left:107px;top:903px;width:94px;height:25px;background:#eeeeee"><span class="ltr">۲۴,۱<i class="z"></i>۸</span></div>
<div class="c st" style="left:35px;top:903px;width:73px;height:25px;background:#eeeeee">تولید</div>
<div class="c n" style="left:1801px;top:927px;width:84px;height:43px;background:#d4e4f5">گروه شکلات<br>قدیم</div>
<div class="c u" style="left:1760px;top:927px;width:42px;height:43px;background:#d4e4f5">کیلوگرم</div>
<div class="c" style="left:1695px;top:927px;width:66px;height:43px;background:#d4e4f5">۵۳۶</div>
<div class="c" style="left:1630px;top:927px;width:66px;height:43px;background:#d4e4f5">۵۳۶</div>
<div class="c" style="left:1557px;top:927px;width:74px;height:43px;background:#fde3a2"><span class="ltr">۵,۳<i class="z"></i>۵,۹۷<i class="z"></i></span></div>
<div class="c" style="left:1464px;top:927px;width:94px;height:43px;background:#d4e4f5">۲,۸۴۴</div>
<div class="c" style="left:1422px;top:927px;width:43px;height:43px;background:#d4e4f5"><span class="ltr"><i class="z"></i></span></div>
<div class="c" style="left:1374px;top:927px;width:49px;height:43px;background:#d4e4f5"><span class="ltr"><i class="z"></i></span></div>
<div class="c" style="left:1298px;top:927px;width:77px;height:43px;background:#d4e4f5"><span class="ltr"><i class="z"></i></span></div>
<div class="c" style="left:1233px;top:927px;width:66px;height:43px;background:#fde3a2">۵۳۶</div>
<div class="c" style="left:1168px;top:927px;width:66px;height:43px;background:#fde3a2">۵۳۶</div>
<div class="c" style="left:1095px;top:927px;width:74px;height:43px;background:#fde3a2"><span class="ltr">۵,۳<i class="z"></i>۵,۹۷<i class="z"></i></span></div>
<div class="c" style="left:1002px;top:927px;width:94px;height:43px;background:#fde3a2">۲,۸۴۴</div>
<div class="c" style="left:939px;top:927px;width:64px;height:43px;background:#d4e4f5"></div>
<div class="c" style="left:877px;top:927px;width:63px;height:43px;background:#d4e4f5"></div>
<div class="c" style="left:800px;top:927px;width:78px;height:43px;background:#fde3a2"><span class="ltr"><i class="z"></i></span></div>
<div class="c" style="left:709px;top:927px;width:92px;height:43px;background:#d4e4f5"><span class="ltr"><i class="z"></i></span></div>
<div class="c" style="left:644px;top:927px;width:66px;height:43px;background:#fde3a2">۵۳۶</div>
<div class="c" style="left:577px;top:927px;width:68px;height:43px;background:#fde3a2">۵۳۶</div>
<div class="c" style="left:499px;top:927px;width:79px;height:43px;background:#fde3a2"><span class="ltr">۵,۳<i class="z"></i>۵,۹۷<i class="z"></i></span></div>
<div class="c" style="left:406px;top:927px;width:94px;height:43px;background:#fde3a2">۲,۸۴۴</div>
<div class="c" style="left:341px;top:927px;width:66px;height:43px;background:#d4e4f5">۲۷,۴۴۱</div>
<div class="c" style="left:275px;top:927px;width:67px;height:43px;background:#d4e4f5">۲۷,۴۴۱</div>
<div class="c" style="left:200px;top:927px;width:76px;height:43px;background:#fde3a2">۱,۷۵۱,۷۲۲</div>
<div class="c" style="left:107px;top:927px;width:94px;height:43px;background:#d4e4f5"><span class="ltr">۴۸,<i class="z"></i>۶۹</span></div>
<div class="c st" style="left:35px;top:927px;width:73px;height:43px;background:#d4e4f5">تولید</div>
<div class="c n" style="left:1801px;top:969px;width:84px;height:25px;background:#eeeeee">گروه پفک</div>
<div class="c u" style="left:1760px;top:969px;width:42px;height:25px;background:#eeeeee">کیلوگرم</div>
<div class="c" style="left:1695px;top:969px;width:66px;height:25px;background:#eeeeee">۶۲۵</div>
<div class="c" style="left:1630px;top:969px;width:66px;height:25px;background:#eeeeee">۶۲۵</div>
<div class="c" style="left:1557px;top:969px;width:74px;height:25px;background:#fde3a2"><span class="ltr">۲,۸۳۸,۴<i class="z"></i><i class="z"></i></span></div>
<div class="c" style="left:1464px;top:969px;width:94px;height:25px;background:#eeeeee">۱,۷۷۴</div>
<div class="c" style="left:1422px;top:969px;width:43px;height:25px;background:#eeeeee"><span class="ltr"><i class="z"></i></span></div>
<div class="c" style="left:1374px;top:969px;width:49px;height:25px;background:#eeeeee"><span class="ltr"><i class="z"></i></span></div>
<div class="c" style="left:1298px;top:969px;width:77px;height:25px;background:#eeeeee"><span class="ltr"><i class="z"></i></span></div>
<div class="c" style="left:1233px;top:969px;width:66px;height:25px;background:#fde3a2">۶۲۵</div>
<div class="c" style="left:1168px;top:969px;width:66px;height:25px;background:#fde3a2">۶۲۵</div>
<div class="c" style="left:1095px;top:969px;width:74px;height:25px;background:#fde3a2"><span class="ltr">۲,۸۳۸,۴<i class="z"></i><i class="z"></i></span></div>
<div class="c" style="left:1002px;top:969px;width:94px;height:25px;background:#fde3a2">۱,۷۷۴</div>
<div class="c" style="left:939px;top:969px;width:64px;height:25px;background:#eeeeee"><span class="ltr">۱,۲۵<i class="z"></i></span></div>
<div class="c" style="left:877px;top:969px;width:63px;height:25px;background:#eeeeee"><span class="ltr">۱,۲۵<i class="z"></i></span></div>
<div class="c" style="left:800px;top:969px;width:78px;height:25px;background:#fde3a2"><span class="ltr">۴,۳۶<i class="z"></i>,۸<i class="z"></i><i class="z"></i></span></div>
<div class="c" style="left:709px;top:969px;width:92px;height:25px;background:#eeeeee">۵,۴۵۱</div>
<div class="c" style="left:644px;top:969px;width:66px;height:25px;background:#fde3a2">۱,۸۷۵</div>
<div class="c" style="left:577px;top:969px;width:68px;height:25px;background:#fde3a2">۱,۸۷۵</div>
<div class="c" style="left:499px;top:969px;width:79px;height:25px;background:#fde3a2">۳,۸۵۳,۳۳۳</div>
<div class="c" style="left:406px;top:969px;width:94px;height:25px;background:#fde3a2">۷,۲۲۵</div>
<div class="c" style="left:341px;top:969px;width:66px;height:25px;background:#eeeeee"><span class="ltr"><i class="z"></i></span></div>
<div class="c" style="left:275px;top:969px;width:67px;height:25px;background:#eeeeee"><span class="ltr"><i class="z"></i></span></div>
<div class="c" style="left:200px;top:969px;width:76px;height:25px;background:#fde3a2"><span class="ltr"><i class="z"></i></span></div>
<div class="c" style="left:107px;top:969px;width:94px;height:25px;background:#eeeeee"><span class="ltr"><i class="z"></i></span></div>
<div class="c st" style="left:35px;top:969px;width:73px;height:25px;background:#eeeeee">تولید</div>
<div class="c n" style="left:1801px;top:993px;width:84px;height:42px;background:#d4e4f5">گروه اسنک و<br>پلت</div>
<div class="c u" style="left:1760px;top:993px;width:42px;height:42px;background:#d4e4f5">کیلوگرم</div>
<div class="c" style="left:1695px;top:993px;width:66px;height:42px;background:#d4e4f5">۸۹۸</div>
<div class="c" style="left:1630px;top:993px;width:66px;height:42px;background:#d4e4f5">۸۹۸</div>
<div class="c" style="left:1557px;top:993px;width:74px;height:42px;background:#fde3a2"><span class="ltr">۲,۱۱۸,<i class="z"></i>۴<i class="z"></i></span></div>
<div class="c" style="left:1464px;top:993px;width:94px;height:42px;background:#d4e4f5"><span class="ltr">۱,۹<i class="z"></i>۲</span></div>
<div class="c" style="left:1422px;top:993px;width:43px;height:42px;background:#d4e4f5"><span class="ltr"><i class="z"></i></span></div>
<div class="c" style="left:1374px;top:993px;width:49px;height:42px;background:#d4e4f5"><span class="ltr"><i class="z"></i></span></div>
<div class="c" style="left:1298px;top:993px;width:77px;height:42px;background:#d4e4f5"><span class="ltr"><i class="z"></i></span></div>
<div class="c" style="left:1233px;top:993px;width:66px;height:42px;background:#fde3a2">۸۹۸</div>
<div class="c" style="left:1168px;top:993px;width:66px;height:42px;background:#fde3a2">۸۹۸</div>
<div class="c" style="left:1095px;top:993px;width:74px;height:42px;background:#fde3a2"><span class="ltr">۲,۱۱۸,<i class="z"></i>۴<i class="z"></i></span></div>
<div class="c" style="left:1002px;top:993px;width:94px;height:42px;background:#fde3a2"><span class="ltr">۱,۹<i class="z"></i>۲</span></div>
<div class="c" style="left:939px;top:993px;width:64px;height:42px;background:#d4e4f5"></div>
<div class="c" style="left:877px;top:993px;width:63px;height:42px;background:#d4e4f5"></div>
<div class="c" style="left:800px;top:993px;width:78px;height:42px;background:#fde3a2"><span class="ltr"><i class="z"></i></span></div>
<div class="c" style="left:709px;top:993px;width:92px;height:42px;background:#d4e4f5"><span class="ltr"><i class="z"></i></span></div>
<div class="c" style="left:644px;top:993px;width:66px;height:42px;background:#fde3a2">۸۹۸</div>
<div class="c" style="left:577px;top:993px;width:68px;height:42px;background:#fde3a2">۸۹۸</div>
<div class="c" style="left:499px;top:993px;width:79px;height:42px;background:#fde3a2"><span class="ltr">۲,۱۱۸,<i class="z"></i>۴<i class="z"></i></span></div>
<div class="c" style="left:406px;top:993px;width:94px;height:42px;background:#fde3a2"><span class="ltr">۱,۹<i class="z"></i>۲</span></div>
<div class="c" style="left:341px;top:993px;width:66px;height:42px;background:#d4e4f5"><span class="ltr"><i class="z"></i></span></div>
<div class="c" style="left:275px;top:993px;width:67px;height:42px;background:#d4e4f5"><span class="ltr"><i class="z"></i></span></div>
<div class="c" style="left:200px;top:993px;width:76px;height:42px;background:#fde3a2"><span class="ltr"><i class="z"></i></span></div>
<div class="c" style="left:107px;top:993px;width:94px;height:42px;background:#d4e4f5"><span class="ltr"><i class="z"></i></span></div>
<div class="c st" style="left:35px;top:993px;width:73px;height:42px;background:#d4e4f5">تولید</div>
<div class="c n" style="left:1801px;top:1034px;width:84px;height:42px;background:#fde3a2">جمع فروش<br>صادراتی</div>
<div class="c" style="left:1760px;top:1034px;width:42px;height:42px;background:#fde3a2"></div>
<div class="c" style="left:1695px;top:1034px;width:66px;height:42px;background:#fde3a2"><span class="ltr">۸۵<i class="z"></i>,۳۱۴</span></div>
<div class="c" style="left:1630px;top:1034px;width:66px;height:42px;background:#fde3a2"><span class="ltr">۸۵<i class="z"></i>,۳۱۴</span></div>
<div class="c" style="left:1557px;top:1034px;width:74px;height:42px;background:#fde3a2"></div>
<div class="c" style="left:1464px;top:1034px;width:94px;height:42px;background:#fde3a2">۱,۱۵۱,۷۱۳</div>
<div class="c" style="left:1422px;top:1034px;width:43px;height:42px;background:#fde3a2"><span class="ltr"><i class="z"></i></span></div>
<div class="c" style="left:1374px;top:1034px;width:49px;height:42px;background:#fde3a2"><span class="ltr"><i class="z"></i></span></div>
<div class="c" style="left:1298px;top:1034px;width:77px;height:42px;background:#fde3a2"><span class="ltr"><i class="z"></i></span></div>
<div class="c" style="left:1233px;top:1034px;width:66px;height:42px;background:#fde3a2"><span class="ltr">۸۵<i class="z"></i>,۳۱۴</span></div>
<div class="c" style="left:1168px;top:1034px;width:66px;height:42px;background:#fde3a2"><span class="ltr">۸۵<i class="z"></i>,۳۱۴</span></div>
<div class="c" style="left:1095px;top:1034px;width:74px;height:42px;background:#fde3a2"></div>
<div class="c" style="left:1002px;top:1034px;width:94px;height:42px;background:#fde3a2">۱,۱۵۱,۷۱۳</div>
<div class="c" style="left:939px;top:1034px;width:64px;height:42px;background:#fde3a2">۷۸,۸۱۲</div>
<div class="c" style="left:877px;top:1034px;width:63px;height:42px;background:#fde3a2">۷۸,۸۱۲</div>
<div class="c" style="left:800px;top:1034px;width:78px;height:42px;background:#fde3a2"></div>
<div class="c" style="left:709px;top:1034px;width:92px;height:42px;background:#fde3a2"><span class="ltr">۱<i class="z"></i>۱,<i class="z"></i>۳۱</span></div>
<div class="c" style="left:644px;top:1034px;width:66px;height:42px;background:#fde3a2">۹۲۹,۱۲۶</div>
<div class="c" style="left:577px;top:1034px;width:68px;height:42px;background:#fde3a2">۹۲۹,۱۲۶</div>
<div class="c" style="left:499px;top:1034px;width:79px;height:42px;background:#fde3a2"></div>
<div class="c" style="left:406px;top:1034px;width:94px;height:42px;background:#fde3a2">۱,۲۵۲,۷۴۴</div>
<div class="c" style="left:341px;top:1034px;width:66px;height:42px;background:#fde3a2">۵۸۱,۶۸۳</div>
<div class="c" style="left:275px;top:1034px;width:67px;height:42px;background:#fde3a2">۵۸۱,۶۸۳</div>
<div class="c" style="left:200px;top:1034px;width:76px;height:42px;background:#fde3a2"></div>
<div class="c" style="left:107px;top:1034px;width:94px;height:42px;background:#fde3a2"><span class="ltr">۶۴۲,۲<i class="z"></i>۲</span></div>
<div class="c" style="left:35px;top:1034px;width:73px;height:42px;background:#fde3a2"></div>
<div class="c s" style="left:1801px;top:1075px;width:84px;height:26px;background:#d6d6d6"></div>
<div class="c s" style="left:1760px;top:1075px;width:42px;height:26px;background:#d6d6d6"></div>
<div class="c s" style="left:1695px;top:1075px;width:66px;height:26px;background:#d6d6d6"></div>
<div class="c s" style="left:1630px;top:1075px;width:66px;height:26px;background:#d6d6d6"></div>
<div class="c s" style="left:1557px;top:1075px;width:74px;height:26px;background:#d6d6d6"></div>
<div class="c s" style="left:1464px;top:1075px;width:94px;height:26px;background:#d6d6d6"></div>
<div class="c s" style="left:1422px;top:1075px;width:43px;height:26px;background:#d6d6d6"></div>
<div class="c s" style="left:1374px;top:1075px;width:49px;height:26px;background:#d6d6d6"></div>
<div class="c s" style="left:1298px;top:1075px;width:77px;height:26px;background:#d6d6d6"></div>
<div class="c s" style="left:1233px;top:1075px;width:66px;height:26px;background:#d6d6d6"></div>
<div class="c s" style="left:1168px;top:1075px;width:66px;height:26px;background:#d6d6d6"></div>
<div class="c s" style="left:1095px;top:1075px;width:74px;height:26px;background:#d6d6d6"></div>
<div class="c s" style="left:1002px;top:1075px;width:94px;height:26px;background:#d6d6d6"></div>
<div class="c s" style="left:939px;top:1075px;width:64px;height:26px;background:#d6d6d6"></div>
<div class="c s" style="left:877px;top:1075px;width:63px;height:26px;background:#d6d6d6"></div>
<div class="c s" style="left:800px;top:1075px;width:78px;height:26px;background:#d6d6d6"></div>
<div class="c s" style="left:709px;top:1075px;width:92px;height:26px;background:#d6d6d6"></div>
<div class="c s" style="left:644px;top:1075px;width:66px;height:26px;background:#d6d6d6"></div>
<div class="c s" style="left:577px;top:1075px;width:68px;height:26px;background:#d6d6d6"></div>
<div class="c s" style="left:499px;top:1075px;width:79px;height:26px;background:#d6d6d6"></div>
<div class="c s" style="left:406px;top:1075px;width:94px;height:26px;background:#d6d6d6"></div>
<div class="c s" style="left:341px;top:1075px;width:66px;height:26px;background:#d6d6d6"></div>
<div class="c s" style="left:275px;top:1075px;width:67px;height:26px;background:#d6d6d6"></div>
<div class="c s" style="left:200px;top:1075px;width:76px;height:26px;background:#d6d6d6"></div>
<div class="c s" style="left:107px;top:1075px;width:94px;height:26px;background:#d6d6d6"></div>
<div class="c s" style="left:35px;top:1075px;width:73px;height:26px;background:#d6d6d6"></div>
<div class="h g" style="left:1760px;top:370px;width:125px;height:25px">شرح</div>
<div class="h g" style="left:1464px;top:370px;width:297px;height:25px">از ابتدای سال مالی تا تاریخ <span class="ltr">۱۴<i class="z"></i>۴/<i class="z"></i>۸/۳<i class="z"></i></span></div>
<div class="h g" style="left:1298px;top:370px;width:167px;height:25px">اصلاحات</div>
<div class="h g" style="left:1002px;top:370px;width:297px;height:25px">از ابتدای سال مالی تا تاریخ <span class="ltr">۱۴<i class="z"></i>۴/<i class="z"></i>۸/۳<i class="z"></i></span> (اصلاح شده)</div>
<div class="h g" style="left:709px;top:370px;width:294px;height:25px">دوره یک ماهه منتهی به <span class="ltr">۱۴<i class="z"></i>۴/<i class="z"></i>۹/۳<i class="z"></i></span></div>
<div class="h g" style="left:406px;top:370px;width:304px;height:25px">از ابتدای سال مالی تا تاریخ <span class="ltr">۱۴<i class="z"></i>۴/<i class="z"></i>۹/۳<i class="z"></i></span></div>
<div class="h g" style="left:107px;top:370px;width:300px;height:25px">از ابتدای سال مالی تا تاریخ <span class="ltr">۱۴<i class="z"></i>۳/<i class="z"></i>۹/۳<i class="z"></i></span></div>
<div class="h w" style="left:35px;top:370px;width:73px;height:66px">وضعیت<br>محصول-واحد</div>
<div class="h sb" style="left:1801px;top:394px;width:84px;height:42px">نام محصول</div>
<div class="h sb" style="left:1760px;top:394px;width:42px;height:42px">واحد</div>
<div class="h sb" style="left:1695px;top:394px;width:66px;height:42px">تعداد تولید</div>
<div class="h sb" style="left:1630px;top:394px;width:66px;height:42px">تعداد فروش</div>
<div class="h sb" style="left:1557px;top:394px;width:74px;height:42px">نرخ فروش<br>(ریال)</div>
<div class="h sb" style="left:1464px;top:394px;width:94px;height:42px">مبلغ فروش<br>(میلیون ریال)</div>
<div class="h sb" style="left:1422px;top:394px;width:43px;height:42px">تعداد<br>تولید</div>
<div class="h sb" style="left:1374px;top:394px;width:49px;height:42px">تعداد<br>فروش</div>
<div class="h sb" style="left:1298px;top:394px;width:77px;height:42px">مبلغ فروش<br>(میلیون ریال)</div>
<div class="h sb" style="left:1233px;top:394px;width:66px;height:42px">تعداد تولید</div>
<div class="h sb" style="left:1168px;top:394px;width:66px;height:42px">تعداد فروش</div>
<div class="h sb" style="left:1095px;top:394px;width:74px;height:42px">نرخ فروش<br>(ریال)</div>
<div class="h sb" style="left:1002px;top:394px;width:94px;height:42px">مبلغ فروش<br>(میلیون ریال)</div>
<div class="h sb" style="left:939px;top:394px;width:64px;height:42px">تعداد تولید</div>
<div class="h sb" style="left:877px;top:394px;width:63px;height:42px">تعداد<br>فروش</div>
<div class="h sb" style="left:800px;top:394px;width:78px;height:42px">نرخ فروش<br>(ریال)</div>
<div class="h sb" style="left:709px;top:394px;width:92px;height:42px">مبلغ فروش<br>(میلیون ریال)</div>
<div class="h sb" style="left:644px;top:394px;width:66px;height:42px">تعداد تولید</div>
<div class="h sb" style="left:577px;top:394px;width:68px;height:42px">تعداد فروش</div>
<div class="h sb" style="left:499px;top:394px;width:79px;height:42px">نرخ فروش<br>(ریال)</div>
<div class="h sb" style="left:406px;top:394px;width:94px;height:42px">مبلغ فروش<br>(میلیون ریال)</div>
<div class="h sb" style="left:341px;top:394px;width:66px;height:42px">تعداد تولید</div>
<div class="h sb" style="left:275px;top:394px;width:67px;height:42px">تعداد فروش</div>
<div class="h sb" style="left:200px;top:394px;width:76px;height:42px">نرخ فروش<br>(ریال)</div>
<div class="h sb" style="left:107px;top:394px;width:94px;height:42px">مبلغ فروش<br>(میلیون ریال)</div>
<div class="a" style="z-index:3;left:35px;top:370px;width:1850px;height:1px;background:#0a8dbb"></div>
<div class="a" style="z-index:3;left:35px;top:370px;width:1px;height:65px;background:#0893c3"></div>
<div class="a" style="z-index:3;left:1884px;top:370px;width:1px;height:65px;background:#0893c3"></div>

<div class="a wm">@codal360.ir</div>
</body>
</html>
